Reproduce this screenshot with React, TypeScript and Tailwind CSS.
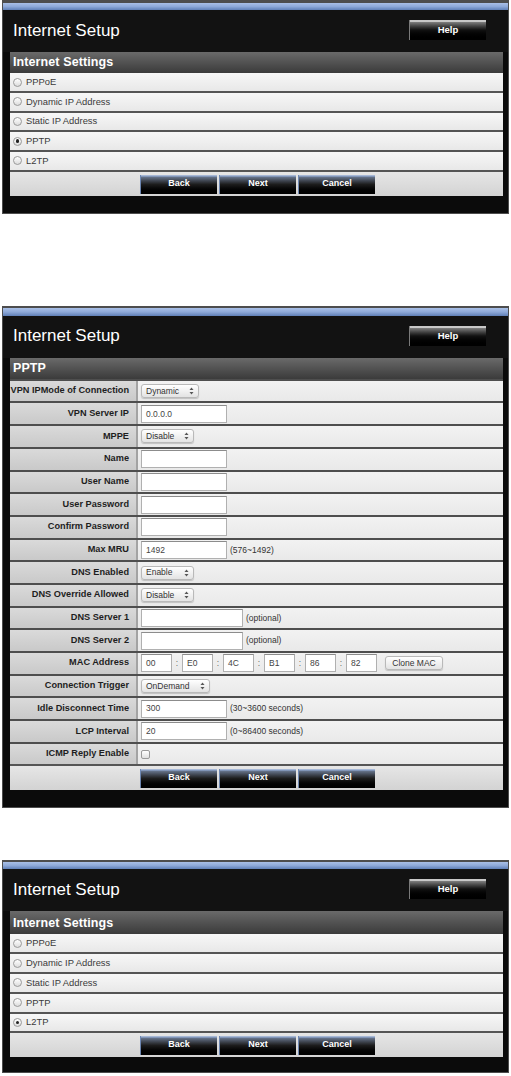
import React from "react";

const FONT = { fontFamily: '"Liberation Sans", Arial, sans-serif' } as const;

function Btn({ label }: { label: string }) {
  return (
    <div className="w-[77px] h-[19px] relative border-l border-[#6d86b0] bg-gradient-to-b from-[#7d8fae] via-[#1c1c1c] to-[#000] flex justify-center pt-[2px]">
      <div className="absolute left-0 right-0 top-0 h-[2px] bg-gradient-to-b from-[#b8c8e4] to-[#6f84a8]" />
      <span className="text-[9px] font-bold text-white leading-[12px]">{label}</span>
    </div>
  );
}

function Panel({
  title,
  children,
  topBorder,
  blue,
  bar,
  bottomPad,
}: {
  title: string;
  children: React.ReactNode;
  topBorder: string;
  blue: string;
  bar: string;
  bottomPad: string;
}) {
  return (
    <div className={`ml-[2px] w-[507px] bg-[#0b0b0b] border border-[#4d4d4d] ${topBorder}`}>
      <div className={`${blue} bg-gradient-to-b from-[#a9bfe6] via-[#8ea9d8] to-[#5f7fb6]`} />
      <div className="h-[42px] bg-[#121212] flex items-center justify-between pl-[10px] pr-[22px]">
        <span className="text-[17px] text-white leading-none mt-[-2px]">Internet Setup</span>
        <div className="w-[77px] h-[20px] relative bg-gradient-to-b from-[#a0a0a0] via-[#111] to-[#000] border-l border-[#7a7a7a] flex justify-center pt-[4px] mt-[-2px]">
          <div className="absolute left-0 right-0 top-0 h-[2px] bg-[#c8c8c8]" />
          <span className="text-[9.5px] font-bold text-white leading-[11px]">Help</span>
        </div>
      </div>
      <div className="px-[7px] pr-[5px]">
        <div className={`${bar} bg-gradient-to-b from-[#6a6a6a] to-[#3b3b3b] flex items-center pl-[3px]`}>
          <span className="text-[12.5px] font-bold text-white tracking-[0.1px]">{title}</span>
        </div>
        {children}
        <div className="h-[26px] border-t-2 border-[#555] bg-gradient-to-b from-[#e6e6e6] to-[#d3d3d3] flex justify-center gap-[2px] pt-[3px] pl-[2px]">
          <Btn label="Back" />
          <Btn label="Next" />
          <Btn label="Cancel" />
        </div>
      </div>
      <div className={bottomPad} />
    </div>
  );
}

function Radio({ checked }: { checked?: boolean }) {
  return (
    <div className="w-[9px] h-[9px] rounded-full border border-[#9a9a9a] bg-gradient-to-b from-[#ffffff] to-[#dcdcdc] flex items-center justify-center shrink-0">
      {checked && <div className="w-[3.5px] h-[3.5px] rounded-full bg-[#222]" />}
    </div>
  );
}

function RadioList({ selected }: { selected: string }) {
  const items = ["PPPoE", "Dynamic IP Address", "Static IP Address", "PPTP", "L2TP"];
  return (
    <div>
      {items.map((it, i) => (
        <div
          key={it}
          className={`${i === 0 ? "h-[18px]" : "h-[19.7px] border-t-2"} border-[#555] bg-gradient-to-b from-[#f7f7f7] to-[#e8e8e8] flex items-center pl-[3px] gap-[4px]`}
        >
          <Radio checked={it === selected} />
          <span className="text-[9.4px] text-[#3a3a3a]">{it}</span>
        </div>
      ))}
    </div>
  );
}

function Arrows() {
  return (
    <svg width="5" height="8" viewBox="0 0 5 8" className="shrink-0">
      <path d="M2.5 0.5 L4.5 3 L0.5 3 Z" fill="#555" />
      <path d="M2.5 7.5 L4.5 5 L0.5 5 Z" fill="#555" />
    </svg>
  );
}

function Select({ value, w }: { value: string; w: string }) {
  return (
    <div
      className={`${w} h-[14px] rounded-[3px] border border-[#b9b9b9] bg-gradient-to-b from-white to-[#e3e3e3] shadow-[0_1px_1px_rgba(0,0,0,0.18)] flex items-center justify-between pl-[4px] pr-[4px]`}
    >
      <span className="text-[8.5px] text-[#333] leading-none">{value}</span>
      <Arrows />
    </div>
  );
}

function Input({ value = "", w = "w-[86px]" }: { value?: string; w?: string }) {
  return (
    <div className={`${w} h-[18px] bg-white border border-[#b0b0b0] border-t-[#8c8c8c] flex items-center pl-[4px] shrink-0`}>
      <span className="text-[8.5px] text-[#444] leading-none">{value}</span>
    </div>
  );
}

function Hint({ t }: { t: string }) {
  return <span className="text-[8.5px] text-[#333] ml-[3px]">{t}</span>;
}

function FormRow({ label, children }: { label: string; children: React.ReactNode }) {
  return (
    <div className="flex h-[22.7px] border-t-2 border-[#4e4e4e]">
      <div className="w-[128px] shrink-0 bg-gradient-to-b from-[#dadada] to-[#c9c9c9] border-r-2 border-[#a3a3a3] flex items-center justify-end pr-[7px]">
        <span className="text-[9.2px] font-bold text-[#1e1e1e] whitespace-nowrap">{label}</span>
      </div>
      <div className="flex-1 bg-gradient-to-b from-[#f2f2f2] to-[#e9e9e9] flex items-center pl-[3px]">{children}</div>
    </div>
  );
}

function Colon() {
  return <span className="w-[10px] text-center text-[8.5px] text-[#666]">:</span>;
}

function PPTPForm() {
  const mac = ["00", "E0", "4C", "B1", "86", "82"];
  return (
    <div>
      <FormRow label="VPN IPMode of Connection">
        <Select value="Dynamic" w="w-[58px]" />
      </FormRow>
      <FormRow label="VPN Server IP">
        <Input value="0.0.0.0" />
      </FormRow>
      <FormRow label="MPPE">
        <Select value="Disable" w="w-[53px]" />
      </FormRow>
      <FormRow label="Name">
        <Input />
      </FormRow>
      <FormRow label="User Name">
        <Input />
      </FormRow>
      <FormRow label="User Password">
        <Input />
      </FormRow>
      <FormRow label="Confirm Password">
        <Input />
      </FormRow>
      <FormRow label="Max MRU">
        <Input value="1492" />
        <Hint t="(576~1492)" />
      </FormRow>
      <FormRow label="DNS Enabled">
        <Select value="Enable" w="w-[53px]" />
      </FormRow>
      <FormRow label="DNS Override Allowed">
        <Select value="Disable" w="w-[53px]" />
      </FormRow>
      <FormRow label="DNS Server 1">
        <Input w="w-[102px]" />
        <Hint t="(optional)" />
      </FormRow>
      <FormRow label="DNS Server 2">
        <Input w="w-[102px]" />
        <Hint t="(optional)" />
      </FormRow>
      <FormRow label="MAC Address">
        {mac.map((m, i) => (
          <React.Fragment key={i}>
            {i > 0 && <Colon />}
            <Input value={m} w="w-[31px]" />
          </React.Fragment>
        ))}
        <div className="ml-[8px] w-[58px] h-[14px] rounded-[3px] border border-[#b9b9b9] bg-gradient-to-b from-white to-[#e3e3e3] shadow-[0_1px_1px_rgba(0,0,0,0.18)] flex items-center justify-center">
          <span className="text-[8.5px] text-[#333] leading-none">Clone MAC</span>
        </div>
      </FormRow>
      <FormRow label="Connection Trigger">
        <Select value="OnDemand" w="w-[69px]" />
      </FormRow>
      <FormRow label="Idle Disconnect Time">
        <Input value="300" />
        <Hint t="(30~3600 seconds)" />
      </FormRow>
      <FormRow label="LCP Interval">
        <Input value="20" />
        <Hint t="(0~86400 seconds)" />
      </FormRow>
      <FormRow label="ICMP Reply Enable">
        <div className="w-[9px] h-[9px] rounded-[2px] border border-[#9a9a9a] bg-gradient-to-b from-white to-[#e0e0e0]" />
      </FormRow>
    </div>
  );
}

export default function App() {
  return (
    <div className="bg-white w-[511px] min-h-[1076px] overflow-hidden" style={FONT}>
      <Panel title="Internet Settings" topBorder="border-t-[3px]" blue="h-[7px]" bar="h-[21px]" bottomPad="h-[17px]">
        <RadioList selected="PPTP" />
      </Panel>
      <div className="h-[92px]" />
      <Panel title="PPTP" topBorder="border-t-[2px]" blue="h-[8px]" bar="h-[21px]" bottomPad="h-[17px]">
        <PPTPForm />
      </Panel>
      <div className="h-[52px]" />
      <Panel title="Internet Settings" topBorder="border-t-[2px]" blue="h-[7px]" bar="h-[23px]" bottomPad="h-[15px]">
        <RadioList selected="L2TP" />
      </Panel>
    </div>
  );
}
